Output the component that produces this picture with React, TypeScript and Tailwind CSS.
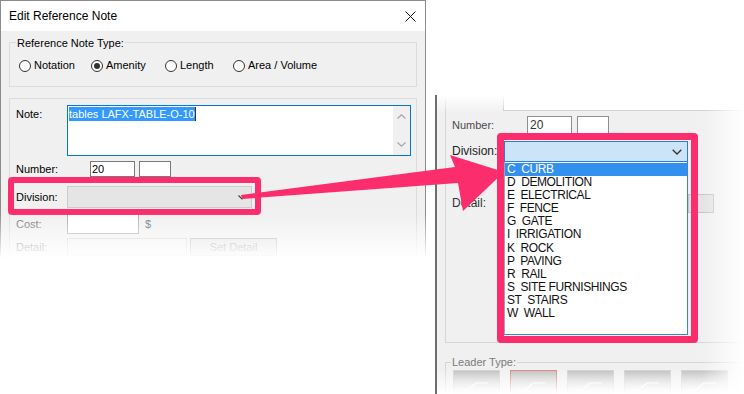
import React from "react";

function Radio({ label, checked, w }: { label: string; checked?: boolean; w: string }) {
  return (
    <div className={`flex items-center gap-[3px] ${w}`}>
      <span className="w-[12px] h-[12px] rounded-full border border-[#333333] bg-white flex items-center justify-center">
        {checked && <span className="w-[6px] h-[6px] rounded-full bg-[#333333]" />}
      </span>
      <span className="text-[11px] leading-[13px] text-black">{label}</span>
    </div>
  );
}

function LeftDialog() {
  return (
    <div className="w-[426px] h-[258px] shrink-0 border border-b-0 border-[#8c8c8c] bg-[#f0f0f0] flex flex-col overflow-hidden">
      <div className="h-[30px] shrink-0 bg-white flex items-center justify-between pl-[8px] pr-[9px]">
        <span className="text-[12px] text-black">Edit Reference Note</span>
        <svg width="11" height="11" viewBox="0 0 11 11">
          <path d="M0.5 0.5L10.5 10.5M10.5 0.5L0.5 10.5" stroke="#111" strokeWidth="1" />
        </svg>
      </div>
      <div className="px-[8px] pt-[11px] flex flex-col">
        <div className="relative h-[45px] border border-[#dcdcdc] pt-[16px] pl-[9px] flex items-start">
          <span className="absolute left-[6px] -top-[6px] px-[1px] bg-[#f0f0f0] text-[11px] leading-[13px] text-black">
            Reference Note Type:
          </span>
          <Radio label="Notation" w="w-[72px]" />
          <Radio label="Amenity" checked w="w-[74px]" />
          <Radio label="Length" w="w-[68px]" />
          <Radio label="Area / Volume" w="w-[100px]" />
        </div>
        <div className="mt-[11px] h-[200px] border border-[#dcdcdc] pt-[6px] pl-[6px] flex flex-col text-[11px] leading-[13px]">
          <div className="flex">
            <span className="w-[51px] pt-[3px] text-black">Note:</span>
            <div className="relative w-[344px] h-[51px] border border-[#0078d7] bg-white pl-[1px] pt-[1px]">
              <div className="flex items-start">
                <span className="bg-[#3399ff] text-white leading-[14px]">tables LAFX-TABLE-O-10</span>
                <span className="w-[1px] h-[14px] bg-[#333]" />
              </div>
              <div className="absolute right-0 top-0 bottom-0 w-[17px] bg-[#f0f0f0] flex flex-col items-center justify-between py-[8px]">
                <svg width="9" height="5" viewBox="0 0 9 5">
                  <path d="M0.5 4.5L4.5 0.8L8.5 4.5" stroke="#a6a6a6" fill="none" strokeWidth="1.2" />
                </svg>
                <svg width="9" height="5" viewBox="0 0 9 5">
                  <path d="M0.5 0.5L4.5 4.2L8.5 0.5" stroke="#a6a6a6" fill="none" strokeWidth="1.2" />
                </svg>
              </div>
            </div>
          </div>
          <div className="mt-[5px] flex items-center h-[16px]">
            <span className="w-[74px] text-black">Number:</span>
            <div className="w-[45px] h-[16px] border border-[#7a7a7a] bg-white pl-[1px] leading-[14px] text-black">20</div>
            <div className="ml-[4px] w-[32px] h-[16px] border border-[#7a7a7a] bg-white" />
          </div>
          <div className="mt-[9px] flex items-center h-[22px]">
            <span className="w-[51px] text-black">Division:</span>
            <div className="w-[185px] h-[22px] border border-[#cccccc] bg-[#e5e5e5] flex items-center justify-end pr-[5px]">
              <svg width="8" height="5" viewBox="0 0 8 5">
                <path d="M0.5 0.5L4 4L7.5 0.5" stroke="#444" fill="none" strokeWidth="1.2" />
              </svg>
            </div>
          </div>
          <div className="mt-[6px] flex items-center h-[20px]">
            <span className="w-[51px] text-[#6d6d6d]">Cost:</span>
            <div className="w-[72px] h-[20px] border border-[#adadad] bg-white" />
            <span className="ml-[6px] text-[#5b6b80]">$</span>
          </div>
          <div className="mt-[4px] flex items-center h-[18px]">
            <span className="w-[51px] text-[#6d6d6d]">Detail:</span>
            <div className="w-[120px] h-[18px] border border-[#cfcfcf]" />
            <div className="ml-[3px] w-[87px] h-[18px] border border-[#adadad] bg-[#e1e1e1] flex items-center justify-center text-[#8a8a8a]">
              Set Detail
            </div>
          </div>
        </div>
      </div>
    </div>
  );
}

const items = [
  "C  CURB",
  "D  DEMOLITION",
  "E  ELECTRICAL",
  "F  FENCE",
  "G  GATE",
  "I  IRRIGATION",
  "K  ROCK",
  "P  PAVING",
  "R  RAIL",
  "S  SITE FURNISHINGS",
  "ST  STAIRS",
  "W  WALL",
];

function LeaderButton({ selected }: { selected?: boolean }) {
  return (
    <div
      className={`w-[47px] h-[24px] shrink-0 bg-linear-to-b from-[#bdbdbd] to-[#eeeeee] border ${
        selected ? "border-[#e07a7a]" : "border-[#cfcfcf]"
      }`}
    >
      <svg width="45" height="22" viewBox="0 0 45 22">
        <path d="M6 19 L14 19 L22 12 L34 12" stroke="#ffffff" strokeWidth="1.2" fill="none" />
      </svg>
    </div>
  );
}

function RightPanel() {
  return (
    <div className="relative ml-[9px] mt-[95px] w-[309px] h-[299px] shrink-0 overflow-hidden bg-[#f0f0f0] border-l-2 border-[#6e6e6e] text-[11px] leading-[13px]">
      <div className="ml-[8px] h-[248px] border-l border-b border-[#d5d5d5] flex flex-col">
        <div className="ml-[57px] h-[16px] shrink-0 bg-white border-l border-b border-[#c9c9c9]" />
        <div className="mt-[5px] flex items-center h-[19px]">
          <span className="pl-[6px] w-[81px] text-[#4a4a4a]">Number:</span>
          <div className="w-[45px] h-[19px] border border-[#8f8f8f] bg-white pl-[2px] leading-[17px] text-[12px] text-[#333]">20</div>
          <div className="ml-[5px] w-[32px] h-[19px] border border-[#8f8f8f] bg-white" />
        </div>
        <div className="mt-[6px] flex items-center h-[21px]">
          <span className="pl-[6px] w-[58px] text-[12px] text-[#222]">Division:</span>
          <div className="relative w-[184px] h-[21px] border border-[#2a7fd4] bg-[#cce4f7] flex items-center justify-end pr-[5px]">
            <svg width="10" height="6" viewBox="0 0 10 6">
              <path d="M0.7 0.7L5 5L9.3 0.7" stroke="#333" fill="none" strokeWidth="1.3" />
            </svg>
            <div className="absolute -left-px top-[20px] w-[184px] h-[173px] bg-white border-l border-r border-b border-l-[#8fa8c8] border-r-[#3a86d6] border-b-[#3a86d6] flex flex-col text-[12px] leading-[13px] tracking-[-0.4px] whitespace-pre pt-[1px]">
              {items.map((it, i) => (
                <div
                  key={it}
                  className={`h-[13.1px] pl-[2px] ${i === 0 ? "bg-[#3291ee] text-white" : "text-[#111]"}`}
                >
                  {it}
                </div>
              ))}
            </div>
          </div>
        </div>
        <div className="mt-[32px] flex items-center h-[19px]">
          <span className="pl-[6px] w-[242px] text-[12px] text-[#333]">Detail:</span>
          <div className="w-[26px] h-[19px] shrink-0 border border-[#c4c4c4] bg-[#e3e3e3]" />
        </div>
      </div>
      <div className="relative mt-[19px] ml-[8px] h-[40px] border-l border-t border-[#d5d5d5] pt-[7px] pl-[7px] flex gap-[10px]">
        <span className="absolute left-[5px] -top-[7px] px-[1px] bg-[#f0f0f0] text-[11px] leading-[13px] text-[#7a7a7a]">
          Leader Type:
        </span>
        <LeaderButton />
        <LeaderButton selected />
        <LeaderButton />
        <LeaderButton />
        <LeaderButton />
      </div>
      <div className="absolute left-[60px] top-[38px] w-[201px] h-[210px] border-[7px] border-[#fc2d6c] rounded-[4px]" />
      <div className="absolute left-0 right-0 top-0 h-[18px] bg-linear-to-b from-white to-white/0" />
      <div className="absolute right-0 top-0 bottom-0 w-[42px] bg-linear-to-r from-white/0 to-white" />
      <div className="absolute left-0 right-0 bottom-0 h-[26px] bg-linear-to-b from-white/0 to-white" />
    </div>
  );
}

export default function App() {
  return (
    <div className="relative w-[744px] h-[394px] bg-white overflow-hidden flex items-start font-['Liberation_Sans',Arial,sans-serif]">
      <LeftDialog />
      <RightPanel />
      <div className="absolute left-[8px] top-[177px] w-[253px] h-[38px] border-[6px] border-[#fc2d6c] rounded-[4px]" />
      <div className="absolute left-0 top-[213px] w-[432px] h-[46px] bg-linear-to-b from-white/0 to-white" />
      <svg className="absolute left-0 top-0 pointer-events-none" width="744" height="394" viewBox="0 0 744 394">
        <polygon
          points="241,195 455,167 450,155 504,172 463,211 458,183 242,199"
          fill="#fc2d6c"
        />
      </svg>
    </div>
  );
}
